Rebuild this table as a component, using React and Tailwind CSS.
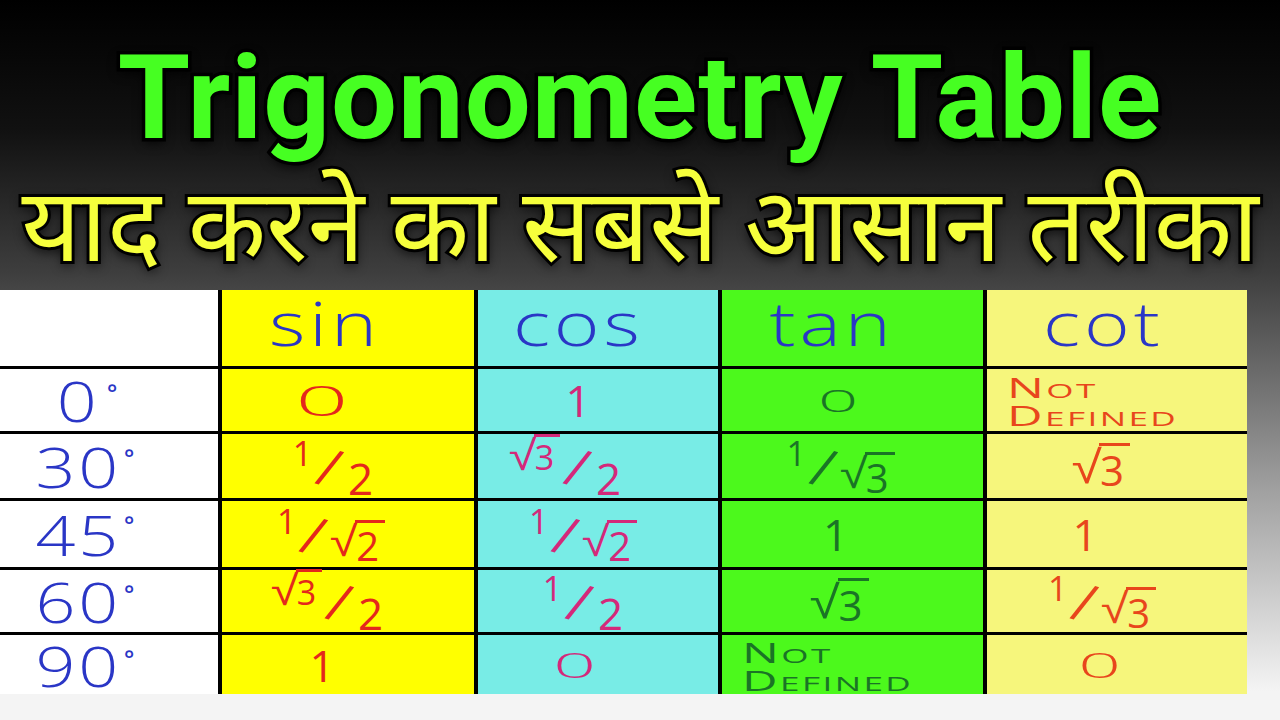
import React from "react";

const hand = { fontFamily: '"Open Sans", "DejaVu Sans", sans-serif' };

function Root({ children, big }) {
  return (
    <span className="inline-flex items-start">
      <span className={(big ? "text-[46px]" : "text-[42px]") + " leading-none mt-[1px] inline-block scale-x-[1.2]"} style={{ fontFamily: '"DejaVu Sans", sans-serif', fontWeight: 300 }}>√</span>
      <span className="border-t-[3px] border-current leading-none pt-[3px] pl-[1px] pr-[6px]">{children}</span>
    </span>
  );
}

function Slash() {
  return <span className="inline-block text-[54px] leading-none rotate-[18deg] mx-[8px]">/</span>;
}

function Frac({ n, d }) {
  return (
    <span className="inline-flex items-center leading-none">
      <span className="text-[34px] -mt-[26px]">{n}</span>
      <Slash />
      <span className="text-[44px] mt-[24px]">{d}</span>
    </span>
  );
}

function OneOverRoot({ d }) {
  return (
    <span className="inline-flex items-center leading-none">
      <span className="-mt-[26px] text-[34px]">1</span>
      <Slash />
      <span className="mt-[18px] text-[40px]"><Root>{d}</Root></span>
    </span>
  );
}

function RootOverTwo() {
  return (
    <span className="inline-flex items-center leading-none">
      <span className="-mt-[22px] text-[34px]"><Root>3</Root></span>
      <Slash />
      <span className="mt-[24px] text-[44px]">2</span>
    </span>
  );
}

function NotDef() {
  return (
    <span className="inline-flex flex-col origin-left scale-x-[1.75] leading-[28px] text-[28px] [font-variant:small-caps] tracking-[0.05em]">
      <span>Not</span>
      <span>Defined</span>
    </span>
  );
}

function Zero({ className = "" }) {
  return <span className={"inline-block leading-none font-light scale-x-[2.2] " + className}>0</span>;
}

function Cell({ bg, color, pr = "pr-[40px]", children, left }) {
  return (
    <div
      className={`${bg} ${color} flex items-center ${left ? "justify-start pl-[20px] pt-[2px]" : "justify-center " + pr} text-[44px] font-normal`}
      style={hand}
    >
      {children}
    </div>
  );
}

export default function App() {
  const Y = "bg-[#ffff00]";
  const C = "bg-[#78ece6]";
  const G = "bg-[#4cf91c]";
  const P = "bg-[#f6f67c]";
  const W = "bg-white";
  const sinC = "text-[#e4281c]";
  const cosC = "text-[#d4287a]";
  const tanC = "text-[#1a7426]";
  const cotC = "text-[#e8461c]";
  const blue = "text-[#2a36c6]";

  const Deg = ({ v }) => (
    <div className={`${W} ${blue} flex items-center justify-center pr-[40px] text-[56px] font-light`} style={hand}>
      <span className="leading-none inline-block scale-x-[1.25] tracking-[0.04em] mr-[12px]">{v}</span>
      <span className="text-[24px] font-semibold leading-none self-start mt-[12px]">°</span>
    </div>
  );

  const Head = ({ children }) => (
    <span className="inline-block scale-x-[1.3] tracking-[0.05em] text-[60px] leading-none font-light -mt-[10px]">{children}</span>
  );

  return (
    <div className="w-[1280px] h-[720px] overflow-hidden flex flex-col bg-[linear-gradient(180deg,#000000_0%,#111111_18%,#3e3e3e_38%,#a0a0a0_68%,#f4f4f4_96%)]">
      <div className="h-[290px] flex flex-col items-center shrink-0">
        <div
          className="pt-[40px] h-[186px] text-[117px] leading-none font-bold text-[#46ff22] tracking-[1px] [-webkit-text-stroke:7px_#000] [paint-order:stroke_fill] [text-shadow:0_4px_12px_rgba(0,0,0,0.9)]"
          style={{ fontFamily: 'Roboto, "Liberation Sans", sans-serif' }}
        >
          Trigonometry Table
        </div>
        <div
          className="text-[102px] leading-none font-normal text-[#f6ff3c] whitespace-nowrap [-webkit-text-stroke:6px_#000] [paint-order:stroke_fill] [text-shadow:0_4px_12px_rgba(0,0,0,0.9)]"
          style={{ fontFamily: '"Noto Sans Devanagari", "Noto Sans", "Lohit Devanagari", "FreeSans", sans-serif' }}
        >
          याद करने का सबसे आसान तरीका
        </div>
      </div>

      <div className="flex shrink-0">
        <div className="w-[1247px] h-[404px] bg-black grid grid-cols-[218px_252px_240px_261px_260px] grid-rows-[76px_62px_64px_66px_62px_59px] gap-x-[4px] gap-y-[3px]">
          {/* header */}
          <div className={W}></div>
          <Cell bg={Y} color={blue} pr="pr-[46px]"><Head>sin</Head></Cell>
          <Cell bg={C} color={blue} pr="pr-[40px]"><Head>cos</Head></Cell>
          <Cell bg={G} color={blue} pr="pr-[40px]"><Head>tan</Head></Cell>
          <Cell bg={P} color={blue} pr="pr-[28px]"><Head>cot</Head></Cell>

          {/* 0 */}
          <Deg v="0" />
          <Cell bg={Y} color={sinC} pr="pr-[52px]"><Zero className="text-[42px]" /></Cell>
          <Cell bg={C} color={cosC}>1</Cell>
          <Cell bg={G} color={tanC} pr="pr-[28px]"><Zero className="text-[32px]" /></Cell>
          <Cell bg={P} color={cotC} left><NotDef /></Cell>

          {/* 30 */}
          <Deg v="30" />
          <Cell bg={Y} color={sinC} pr="pr-[30px]"><Frac n="1" d="2" /></Cell>
          <Cell bg={C} color={cosC} pr="pr-[64px]"><RootOverTwo /></Cell>
          <Cell bg={G} color={tanC} pr="pr-[24px]"><OneOverRoot d="3" /></Cell>
          <Cell bg={P} color={cotC} pr="pr-[30px]"><span className="text-[42px]"><Root big>3</Root></span></Cell>

          {/* 45 */}
          <Deg v="45" />
          <Cell bg={Y} color={sinC} pr="pr-[34px]"><OneOverRoot d="2" /></Cell>
          <Cell bg={C} color={cosC} pr="pr-[30px]"><OneOverRoot d="2" /></Cell>
          <Cell bg={G} color={tanC} pr="pr-[34px]">1</Cell>
          <Cell bg={P} color={cotC} pr="pr-[64px]">1</Cell>

          {/* 60 */}
          <Deg v="60" />
          <Cell bg={Y} color={sinC} pr="pr-[40px]"><RootOverTwo /></Cell>
          <Cell bg={C} color={cosC} pr="pr-[30px]"><Frac n="1" d="2" /></Cell>
          <Cell bg={G} color={tanC} pr="pr-[24px]"><span className="text-[42px]"><Root big>3</Root></span></Cell>
          <Cell bg={P} color={cotC} pr="pr-[30px]"><OneOverRoot d="3" /></Cell>

          {/* 90 */}
          <Deg v="90" />
          <Cell bg={Y} color={sinC} pr="pr-[52px]">1</Cell>
          <Cell bg={C} color={cosC} pr="pr-[46px]"><Zero className="text-[34px]" /></Cell>
          <Cell bg={G} color={tanC} left><NotDef /></Cell>
          <Cell bg={P} color={cotC} pr="pr-[34px]"><Zero className="text-[34px]" /></Cell>
        </div>
      </div>
    </div>
  );
}
